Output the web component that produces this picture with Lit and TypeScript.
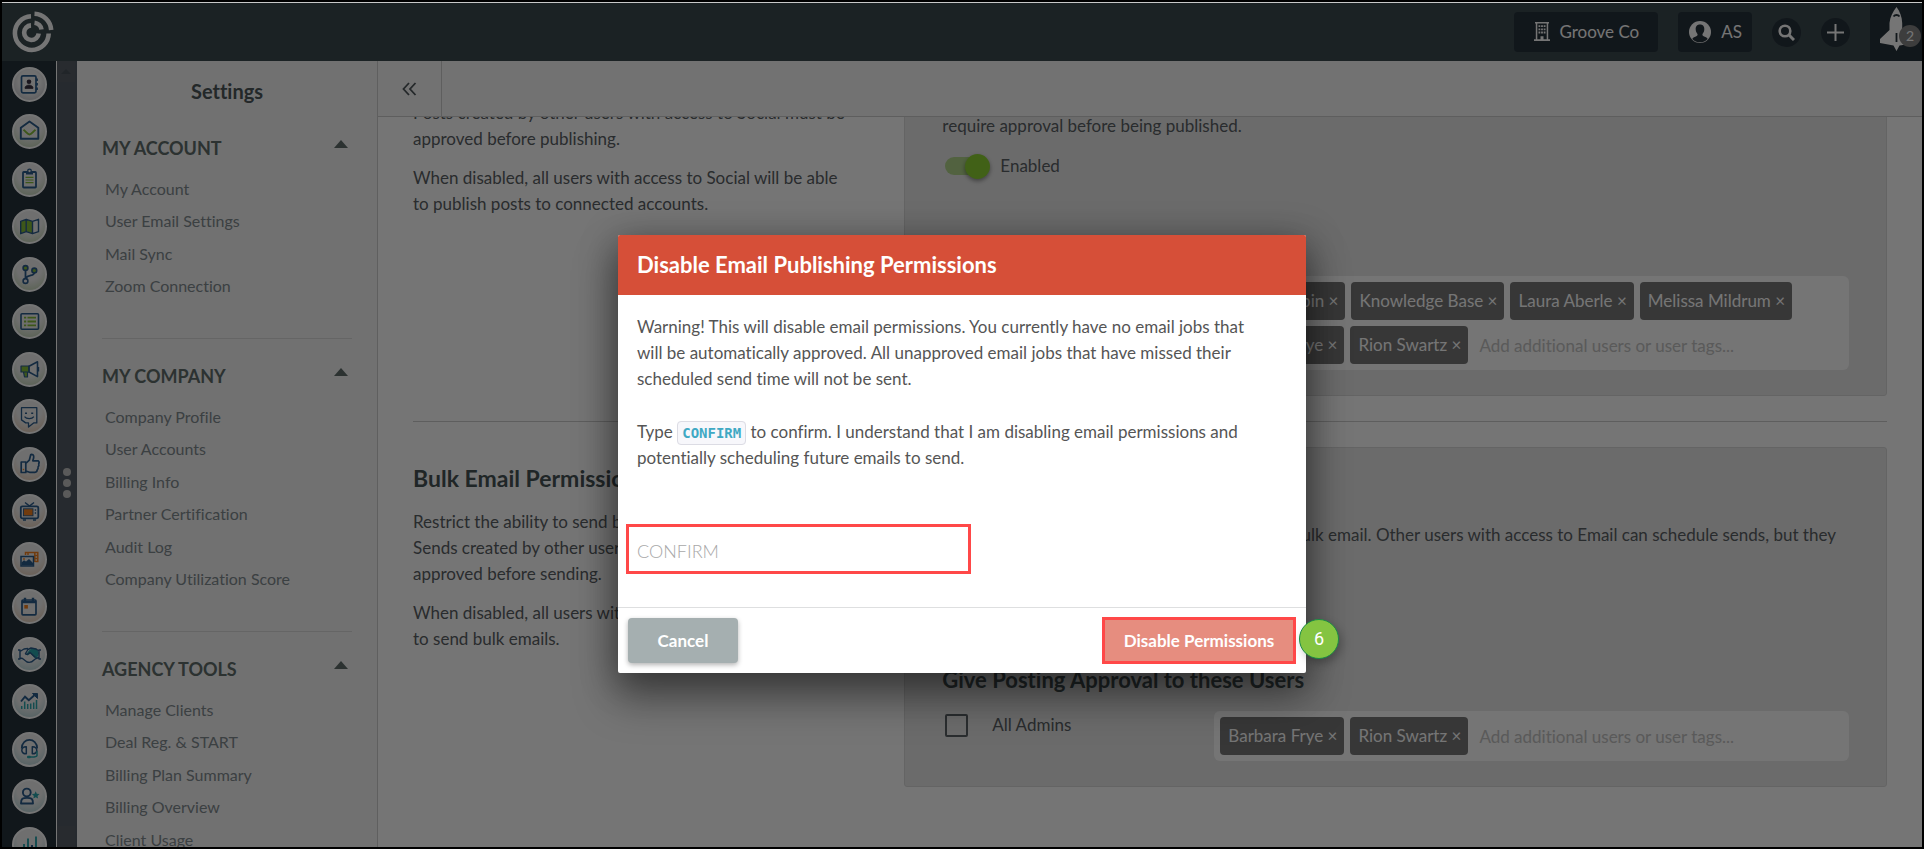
import { LitElement, html, svg, css } from "lit";
import { customElement, property } from "lit/decorators.js";

type Tint = "grey" | "green" | "orange" | "teal";

const N = "#2b5c8c";
const G = "#86bd3a";
const O = "#f58220";
const T = "#2aa5ad";

const railItems: { label: string; tint: Tint; icon: unknown }[] = [
  { label: "Contacts", tint: "grey", icon: svg`
    <rect x="9.5" y="8.8" width="14.5" height="17" rx="1.5" fill="none" stroke=${N} stroke-width="1.7"/>
    <path d="M24.8 11.5v2.6M24.8 16v2.6M24.8 20.5v2.6" stroke=${N} stroke-width="2.2"/>
    <circle cx="17" cy="14.8" r="2.3" fill="#3b3444"/><path d="M13 21.3c0-4.2 8-4.2 8 0z" fill="#3b3444" stroke="#3b3444"/>` },
  { label: "Email", tint: "green", icon: svg`
    <path d="M8.8 24.8v-11L17.5 7.5l8.8 6.3v11z" fill="none" stroke=${N} stroke-width="1.9" stroke-linejoin="round"/>
    <path d="M11.5 15.8c3 2.2 4 4.6 6 4.6s3-2.4 6-4.6" fill="none" stroke=${G} stroke-width="2"/>` },
  { label: "Forms", tint: "green", icon: svg`
    <rect x="11" y="10" width="13" height="15.5" rx=".8" fill="none" stroke=${N} stroke-width="1.8"/>
    <path d="M14 9.5h7v3h-7z" fill=${N}/><circle cx="17.5" cy="9" r="1.8" fill="#f4f4f4" stroke=${N} stroke-width="1.3"/>
    <path d="M13.5 15.3h8M13.5 18h8M13.5 20.7h8" stroke=${G} stroke-width="1.2"/>` },
  { label: "Landing pages", tint: "green", icon: svg`
    <path d="M9 12.5l5-2v12l-5 2zM20.5 12.5l-6-2v12l6 2z" fill=${G}/>
    <path d="M8.7 12.3l5.5-2 6.3 2 6-2v12.4l-6 2-6.3-2-5.5 2zM14.2 10.3v12.4M20.5 12.3v12.4" fill="none" stroke=${N} stroke-width="1.4" stroke-linejoin="round"/>` },
  { label: "Automations", tint: "green", icon: svg`
    <path d="M13.5 13v9M22.5 14.5c0 6-6 2-9 7" fill="none" stroke=${N} stroke-width="1.8"/>
    <circle cx="13.5" cy="11" r="2.4" fill=${G} stroke=${N} stroke-width="1.6"/><circle cx="22.3" cy="13.5" r="2.4" fill=${G} stroke=${N} stroke-width="1.6"/>
    <circle cx="13.5" cy="24" r="2.4" fill="#eee" stroke=${N} stroke-width="1.6"/>` },
  { label: "Lists", tint: "green", icon: svg`
    <rect x="9" y="9.8" width="17.5" height="15.5" rx="1" fill="none" stroke=${N} stroke-width="1.6"/>
    <path d="M12 13.7h2.2M12 17.5h2.2M12 21.3h2.2M15.5 13.7h8.5M15.5 17.5h8.5M15.5 21.3h8.5" stroke=${G} stroke-width="1.8"/>` },
  { label: "Campaigns", tint: "green", icon: svg`
    <path d="M9 14h8v6H9zM11.5 20h4v5h-3z" fill=${G} stroke=${N} stroke-width="1.2" stroke-linejoin="round"/>
    <path d="M17 14.2l8.5-4.4v14.8L17 20zM26.4 15v4.4" fill="none" stroke=${N} stroke-width="1.6" stroke-linejoin="round"/>` },
  { label: "Chat", tint: "orange", icon: svg`
    <path d="M9.5 8.7h15.3v15.2h-3.2L16.5 28v-4.1h-2.8l-4.2-3z" fill="none" stroke=${N} stroke-width="1.3" stroke-linejoin="round"/>
    <path d="M13 14.2h2M19.2 14.2h2" stroke=${N} stroke-width="1.6"/><path d="M12.5 17.6c2 2.6 7.4 2.6 9.4 0" fill="none" stroke=${N} stroke-width="1.2"/>` },
  { label: "Social", tint: "orange", icon: svg`
    <path d="M9.2 15h4.6v10.5H9.2zM13.8 16.5l3.5-3.3 1.5-5.7c3.4-.4 3.6 2 2 6.3h5.5c1.2 1 1 2 .4 3 .4 1.3.2 2.3-.6 3 .2 1.3 0 2.3-.9 3-.1 1.7-.8 2.5-2.2 2.5h-5.5l-3.7-1.3" fill="none" stroke=${N} stroke-width="1.7" stroke-linejoin="round"/>
    <rect x="10.8" y="21.8" width="1.4" height="1.4" fill=${O}/>` },
  { label: "Ads", tint: "orange", icon: svg`
    <path d="M13 8.5l4.5 3.5 4.5-3.5M11 26h3M21 26h3" fill="none" stroke=${N} stroke-width="1.5"/>
    <rect x="8.8" y="12.3" width="17.5" height="12" rx="1.5" fill="none" stroke=${N} stroke-width="1.8"/>
    <rect x="11.5" y="14.8" width="9.5" height="7" fill=${O} stroke=${N} stroke-width=".9"/><path d="M23.4 15.3v1.5M23.4 18.3v1.5" stroke=${N} stroke-width="1.4"/>` },
  { label: "Media", tint: "orange", icon: svg`
    <path d="M13.5 13v-2.5h12.3v9h-2.5M16 10v3M22.8 11v9M23 13.5h3M23 16.5h3" fill="none" stroke=${O} stroke-width="1.5"/>
    <rect x="9" y="14.5" width="12.5" height="9.5" fill="#eee" stroke=${N} stroke-width="1.5"/>
    <path d="M9.5 23.5v-3l2.5-2.3 2 1.3 3-2.5 4 4v2.5z" fill=${N}/><circle cx="12" cy="17" r=".9" fill=${O}/>` },
  { label: "Calendar", tint: "orange", icon: svg`
    <rect x="10" y="11" width="14" height="14.8" rx="1" fill="none" stroke=${N} stroke-width="1.7"/>
    <path d="M10 13h14M13 8.8v3M21 8.8v3" stroke=${N} stroke-width="2.4"/><rect x="12.3" y="16" width="3.6" height="3.6" fill=${O}/>` },
  { label: "Opportunities", tint: "teal", icon: svg`
    <path d="M17 13.5l2.5-2h5l2.5 4.5-2 5.5-3-1-3.5-4-3 2-1.5-1z" fill=${T}/>
    <path d="M6 13h2v9H6M29 13h-2v9h2M8 14.5l4-2.5 4-.5M8 21l2.5.5 4.5 3.5c2 .7 5 .3 7-2l2.5-2M16 12.5l3-1.5 5 1 3 2M16 12.5l-2.5 4c1 1.5 2.5 1 4.5-1l5.5 5M27 20.5l-3 1" fill="none" stroke=${N} stroke-width="1.4" stroke-linejoin="round"/>` },
  { label: "Analytics", tint: "teal", icon: svg`
    <path d="M9 17.5l4-4.8 3.8 3.6 6.4-5.8" fill="none" stroke=${N} stroke-width="1.9"/><path d="M20.5 9.5h5v5z" fill=${N} stroke=${N}/>
    <path d="M9.7 25v-3M12.7 25v-7.5M15.7 25v-5M18.7 25v-5.5M21.7 25v-6.5M24.5 25v-9" stroke=${T} stroke-width="1.5"/>` },
  { label: "Support", tint: "teal", icon: svg`
    <path d="M9.7 16.5c0-11.5 15.5-11.5 15.5 0" fill="none" stroke=${N} stroke-width="1.7"/>
    <path d="M14.3 14.8v7c-6 .4-6-7.4 0-7zM20.3 14.8v7c6 .4 6-7.4 0-7z" fill="none" stroke=${N} stroke-width="1.5" stroke-linejoin="round"/>
    <path d="M25 19v4.5c-.5 1.8-3 1.6-6 1.6" fill="none" stroke=${T} stroke-width="1.5"/><rect x="15" y="23.8" width="4" height="2.4" rx="1" fill=${T}/>` },
  { label: "User rewards", tint: "teal", icon: svg`
    <circle cx="14.8" cy="13.5" r="3.9" fill="none" stroke=${N} stroke-width="1.9"/>
    <path d="M9 24.5c0-5 1.5-5.6 6-5.6s6 .6 6 5.6z" fill="none" stroke=${N} stroke-width="1.9" stroke-linejoin="round"/>
    <path d="M23.7 12.3l1.1 2.5 2.7.3-2 1.8.6 2.7-2.4-1.4-2.4 1.4.6-2.7-2-1.8 2.7-.3z" fill=${T}/>` },
  { label: "Reports", tint: "teal", icon: svg`
    <path d="M12 26v-9M16 26V11.5M20 26v-8M24 26V9.5" stroke=${T} stroke-width="1.9"/><path d="M12 26v-4M20 26v-8" stroke=${N} stroke-width="1.9"/>` },
];

const groups = [
  { title: "MY ACCOUNT", items: ["My Account", "User Email Settings", "Mail Sync", "Zoom Connection"] },
  { title: "MY COMPANY", items: ["Company Profile", "User Accounts", "Billing Info", "Partner Certification", "Audit Log", "Company Utilization Score"] },
  { title: "AGENCY TOOLS", items: ["Manage Clients", "Deal Reg. & START", "Billing Plan Summary", "Billing Overview", "Client Usage"] },
];

const reset = css`
  * { box-sizing: border-box; }
  a { color: inherit; text-decoration: none; }
  h1, h2, h3, p, ul { margin: 0; padding: 0; font-weight: 400; }
  ul { list-style: none; }
  button, input { font: inherit; color: inherit; border: 0; padding: 0; margin: 0; }
  svg { display: block; }
`;

@customElement("top-bar")
class TopBar extends LitElement {
  static styles = [reset, css`
    :host { display: flex; align-items: center; gap: 20px; background: #3b4a50; color: #fff; padding-left: 10px; }
    .logo { margin-right: auto; }
    .btn { display: flex; align-items: center; background: #27323b; height: 40px; border-radius: 4px; cursor: pointer; }
    .company { padding: 0 19px 0 20px; gap: 9px; }
    .user { padding: 0 10px 0 11px; gap: 10px; }
    .round { width: 29px; height: 29px; border-radius: 50%; justify-content: center; }
    .rocket { position: relative; align-self: stretch; width: 52px; background: #27323b; padding: 4px 0 0 10px; }
    .count { position: absolute; right: 1px; top: 22px; width: 22px; height: 22px; border-radius: 50%; background: #858585; font-size: 14px; line-height: 22px; text-align: center; }
  `];
  render() {
    return html`
      <a class="logo" href="#" aria-label="Home">
        <svg width="42" height="42" viewBox="0 0 42 42" fill="none" stroke="#fff" stroke-width="4.6">
          <path d="M19 5.2A16.9 16.9 0 1 0 36.7 22.5"/><path d="M22.5 2.8A17.5 17.5 0 0 1 39.2 19"/>
          <path d="M19 14.4A7.3 7.3 0 1 0 26.7 22.5"/><path d="M22.5 11.8A8 8 0 0 1 29.5 18.5"/>
        </svg>
      </a>
      <button class="btn company">
        <svg width="16" height="20" viewBox="0 0 16 20"><path fill="#fff" fill-rule="evenodd" d="M1 0h14v1.5h-.8v15.8H16V19H0v-1.7h1.8V1.5H1zM3.3 1.5v15.8h3.2v-3h3v3h3.2V1.5zM4.5 3.2h1.8V5H4.5zM7.1 3.2h1.8V5H7.1zM9.7 3.2h1.8V5H9.7zM4.5 6.4h1.8v1.8H4.5zM7.1 6.4h1.8v1.8H7.1zM9.7 6.4h1.8v1.8H9.7zM4.5 9.6h1.8v1.8H4.5zM7.1 9.6h1.8v1.8H7.1zM9.7 9.6h1.8v1.8H9.7z"/></svg>
        <span>Groove Co</span>
      </button>
      <button class="btn user">
        <svg width="22" height="22" viewBox="0 0 22 22"><circle cx="11" cy="11" r="11" fill="#fff"/><path fill="#27323b" d="M11 3.6c3.2 0 4.5 2.3 4.3 5-.1 2-.9 3.4-1.8 4.5-.3 1.3.2 1.8 1.6 2.3 1.8.6 3.2 1.3 3.6 2.6C16.5 20.5 14 21.3 11 21.3S5.5 20.5 3.3 18c.4-1.3 1.8-2 3.6-2.6 1.4-.5 1.9-1 1.6-2.3-.9-1.1-1.7-2.5-1.8-4.5-.2-2.7 1.1-5 4.3-5z"/></svg>
        <span>AS</span>
      </button>
      <button class="btn round" aria-label="Search">
        <svg width="17" height="17" viewBox="0 0 17 17" fill="none" stroke="#fff"><circle cx="7" cy="7" r="5.3" stroke-width="2.6"/><path d="M11 11l5 5" stroke-width="3"/></svg>
      </button>
      <button class="btn round" aria-label="Add">
        <svg width="17" height="17" viewBox="0 0 17 17" stroke="#fff" stroke-width="2"><path d="M8.5 0v17M0 8.5h17"/></svg>
      </button>
      <div class="rocket">
        <svg width="30" height="44" viewBox="0 0 30 44"><path fill="#fff" d="M16.5 0c3.5 4.5 5.5 10 5.7 16v9.5l7.3 8V37l-10 1.5-3 5.5-3-5.5L0 36v-4l9.5-9v-7C10 10 13 4.500 16.500 0z"/><path fill="none" stroke="#27323b" stroke-width="1.8" d="M13.500 9.500c1.500-2 4.500-2 6 0M16.500 26v9"/></svg>
        <span class="count">2</span>
      </div>`;
  }
}

@customElement("icon-rail")
class IconRail extends LitElement {
  static styles = [reset, css`
    :host { display: block; background: #27323b; border-right: 1px solid #fff; overflow: hidden; padding: 6px 0 0 10px; }
    li { margin-bottom: 12px; }
    li:nth-child(even) { margin-bottom: 13px; }
    .item { display: block; width: 35px; height: 35px; border-radius: 50%; border: 2px solid #fff; }
    .item svg { margin: -2px; }
    .grey { background: radial-gradient(circle at 50% 40%, #f4f4f4 45%, #b9b9c0); }
    .green { background: radial-gradient(circle at 50% 30%, #f2f2f2 45%, #b9cfa8); }
    .orange { background: radial-gradient(circle at 50% 30%, #f2f2f2 45%, #e5c5a8); }
    .teal { background: radial-gradient(circle at 50% 30%, #f2f2f2 45%, #a8cfd3); }
  `];
  render() {
    return html`<nav aria-label="Products"><ul>${railItems.map((i) => html`
      <li><a class="item ${i.tint}" href="#" aria-label=${i.label}><svg width="35" height="35" viewBox="0 0 35 35">${i.icon}</svg></a></li>`)}</ul></nav>`;
  }
}

@customElement("settings-nav")
class SettingsNav extends LitElement {
  static styles = [reset, css`
    :host { display: block; background: #f6f6f6; border-right: 1px solid #cfcfcf; padding: 18px 25px 0; overflow: hidden; }
    h1 { font-size: 20px; line-height: 24px; font-weight: 700; color: #4e575b; text-align: center; margin-bottom: 33px; }
    section + section { border-top: 1px solid #dcdcdc; padding-top: 25px; margin-top: 36px; }
    .head { display: flex; justify-content: space-between; width: 100%; background: none; font-size: 18px; line-height: 24px; font-weight: 700; color: #606d6b; padding-right: 4px; cursor: pointer; }
    .head svg { margin-top: 4px; }
    ul { margin-top: 13px; padding-left: 3px; font-size: 16px; line-height: 32px; color: #828b90; }
    li:nth-child(even) { margin-bottom: 1px; }
  `];
  render() {
    return html`<h1>Settings</h1>${groups.map((g) => html`
      <section>
        <button class="head">${g.title}<svg width="14" height="8" viewBox="0 0 14 8"><path fill="#606d6b" d="M7 0l7 8H0z"/></svg></button>
        <ul>${g.items.map((t) => html`<li><a href="#">${t}</a></li>`)}</ul>
      </section>`)}`;
  }
}

@customElement("approver-panel")
class ApproverPanel extends LitElement {
  @property() heading = "";
  @property() lead = "";
  @property() tail = "";
  @property({ type: Array }) users: string[] = [];
  static styles = [reset, css`
    :host { display: block; background: #e9e9e9; border: 1px solid #dadada; border-radius: 3px; padding: 12px 37px 25px; }
    .title { font-size: 22px; line-height: 30px; font-weight: 700; color: #475356; margin: 17px 0 15px; }
    .desc { line-height: 26px; }
    .switch { display: flex; align-items: center; gap: 12px; height: 26px; margin: 14px 0 51px 3px; }
    .switch input { appearance: none; width: 43px; height: 18px; border-radius: 9px; background: #b2d68c; display: flex; align-items: center; justify-content: flex-end; }
    .switch input::before { content: ""; width: 25px; height: 25px; margin-right: -2px; border-radius: 50%; background: #8fd434; box-shadow: 0 2px 4px rgba(0,0,0,.4); flex: none; }
    .sub { font-size: 22px; line-height: 30px; font-weight: 700; color: #475356; margin-bottom: 16px; }
    .row { display: grid; grid-template-columns: 272px 1fr; align-items: start; }
    .check { display: flex; align-items: center; gap: 24px; padding: 1px 3px; line-height: 26px; }
    .check input { appearance: none; width: 23px; height: 23px; border: 2px solid #5c6266; border-radius: 2px; }
    .field { display: flex; flex-wrap: wrap; gap: 6px; padding: 6px; background: #fff; border-radius: 6px; }
    .chip { height: 38px; padding: 0 7px 0 8px; border-radius: 4px; background: #787878; color: #fff; line-height: 37px; white-space: nowrap; }
    .chip button { background: none; cursor: pointer; }
    .add { flex: 1; min-width: 260px; height: 38px; padding-left: 5px; background: none; }
    .add::placeholder { color: #c4c4c4; opacity: 1; }
  `];
  render() {
    return html`
      ${this.heading ? html`<h2 class="title">${this.heading}</h2>` : ""}
      <p class="desc">${this.lead} ${this.tail}</p>
      <label class="switch"><input type="checkbox" role="switch" checked />Enabled</label>
      <h3 class="sub">Give Posting Approval to these Users</h3>
      <div class="row">
        <label class="check"><input type="checkbox" />All Admins</label>
        <div class="field">
          ${this.users.map((u) => html`<span class="chip">${u} <button aria-label="Remove ${u}">×</button></span>`)}
          <input class="add" aria-label="Add users" placeholder="Add additional users or user tags..." />
        </div>
      </div>`;
  }
}

@customElement("confirm-dialog")
class ConfirmDialog extends LitElement {
  static styles = [reset, css`
    :host { display: block; position: relative; width: 688px; background: #fff; border-radius: 2px; color: #555; box-shadow: 0 24px 40px 3px rgba(0,0,0,.35), 0 6px 36px rgba(0,0,0,.35); }
    h2 { background: #d64f38; color: #fff; font-size: 22px; line-height: 60px; font-weight: 700; padding: 0 19px; border-radius: 2px 2px 0 0; }
    .body { padding: 19px 8px 33px; }
    .body p { line-height: 26px; padding: 0 36px 0 11px; margin-bottom: 27px; }
    code { font: 700 14px "DejaVu Sans Mono", monospace; color: #3fa9c4; background: #f7f7fb; border: 1px solid #dcdce4; border-radius: 4px; padding: 3px 4px; }
    .body input { display: block; width: 345px; height: 50px; border: 3px solid #ff4848; padding: 4px 8px 0; margin-top: 53px; font-size: 18px; font-weight: 300; background: #fff; }
    .body input::placeholder { color: #a8a8a8; opacity: 1; }
    footer { display: flex; justify-content: space-between; align-items: center; border-top: 1px solid #dedfe0; padding: 9px 10px; }
    footer button { font-weight: 700; color: #fff; cursor: pointer; }
    .cancel { width: 110px; height: 45px; border-radius: 4px; background: #a5afb0; box-shadow: 0 2px 5px rgba(0,0,0,.3); }
    .danger { height: 47px; width: 194px; border: 3px solid #ff4848; background: #e68d7f; }
    .step { position: absolute; right: -33px; bottom: 14px; width: 40px; height: 40px; border-radius: 50%; background: #84c441; border: 1px solid #1a8a45; color: #fff; font: 18px/38px Roboto, sans-serif; text-align: center; box-shadow: 3px 4px 8px rgba(0,0,0,.25); }
  `];
  render() {
    return html`
      <h2>Disable Email Publishing Permissions</h2>
      <div class="body">
        <p>Warning! This will disable email permissions. You currently have no email jobs that will be automatically approved. All unapproved email jobs that have missed their scheduled send time will not be sent.</p>
        <p>Type <code>CONFIRM</code> to confirm. I understand that I am disabling email permissions and potentially scheduling future emails to send.</p>
        <input aria-label="Type CONFIRM" placeholder="CONFIRM" />
      </div>
      <footer><button class="cancel">Cancel</button><button class="danger">Disable Permissions</button></footer>
      <span class="step">6</span>`;
  }
}

@customElement("app-root")
class AppRoot extends LitElement {
  static styles = [reset, css`
    :host { display: block; box-sizing: border-box; height: 100vh; border: 2px solid #000; font: 17px/26px Lato, sans-serif; font-variant-ligatures: none; color: #5a6064; overflow: hidden; }
    .app { position: relative; height: 100%; border-top: 1px solid #c8c8c8; display: grid; grid-template: 58px minmax(0, 1fr) / 55px 20px 301px minmax(0, 1fr); background: #fff; overflow: hidden; }
    top-bar { grid-column: 1 / -1; }
    .strip { display: flex; flex-direction: column; justify-content: space-between; align-items: center; background: #535d66; }
    .arrow { width: 18px; height: 21px; background: #575f67; display: flex; align-items: center; justify-content: center; align-self: flex-start; }
    .dots { display: grid; gap: 3px; padding-top: 57px; }
    .dots i { width: 8px; height: 8px; border-radius: 50%; background: #c4c4c4; }
    .main { display: flex; flex-direction: column; min-height: 0; }
    .bar { flex: none; height: 56px; background: #f8f8f8; border-bottom: 1px solid #cdcdcd; display: flex; }
    .collapse { width: 64px; border-right: 1px solid #cdcdcd; background: none; display: flex; align-items: center; justify-content: center; cursor: pointer; }
    .view { flex: 1; min-height: 0; overflow: hidden; }
    .scrolled { margin-top: -17px; padding: 0 35px; }
    .section { display: grid; grid-template-columns: 1fr 2fr; }
    .section + .section { border-top: 1px solid #cdcdcd; margin-top: 25px; padding-top: 25px; }
    .about { padding-right: 50px; }
    .about h2 { font-size: 23px; line-height: 30px; font-weight: 700; color: #475356; padding: 16px 0; white-space: nowrap; }
    .about p + p { margin-top: 13px; }
    .scrim { position: absolute; inset: 0; background: rgba(0,0,0,.54); }
    .overlay { position: absolute; inset: 0; display: flex; justify-content: center; align-items: flex-start; padding-top: 232px; }
  `];
  render() {
    return html`<div class="app">
      <top-bar></top-bar>
      <icon-rail></icon-rail>
      <div class="strip">
        <span class="arrow"><svg width="10" height="5" viewBox="0 0 10 5"><path fill="#48525a" d="M5 0l5 5H0z"/></svg></span>
        <span class="dots"><i></i><i></i><i></i></span>
        <span class="arrow"></span>
      </div>
      <settings-nav></settings-nav>
      <div class="main">
        <div class="bar"><button class="collapse" aria-label="Collapse"><svg width="15" height="14" viewBox="0 0 15 14" fill="none" stroke="#50585c" stroke-width="1.8"><path d="M7 1L1.5 7 7 13M13.5 1L8 7l5.5 6"/></svg></button></div>
        <div class="view"><div class="scrolled">
          <div class="section">
            <div class="about">
              <p>Posts created by other users with access to Social must be approved before publishing.</p>
              <p>When disabled, all users with access to Social will be able to publish posts to connected accounts.</p>
            </div>
            <approver-panel tail="require approval before being published."
              .users=${["Emma Dobin", "Knowledge Base", "Laura Aberle", "Melissa Mildrum", "Barbara Frye", "Rion Swartz"]}></approver-panel>
          </div>
          <div class="section">
            <div class="about">
              <h2>Bulk Email Permissions</h2>
              <p>Restrict the ability to send bulk emails to selected users. Sends created by other users with access to Email must be approved before sending.</p>
              <p>When disabled, all users with access to Emails will be able to send bulk emails.</p>
            </div>
            <approver-panel heading="Email Sends"
              lead="The users chosen below can approve and send bulk email. Other users with access to Email can schedule sends, but they"
              tail="require approval before being sent."
              .users=${["Barbara Frye", "Rion Swartz"]}></approver-panel>
          </div>
        </div></div>
      </div>
      <div class="scrim"></div>
      <div class="overlay"><confirm-dialog role="dialog" aria-modal="true" aria-label="Disable Email Publishing Permissions"></confirm-dialog></div>
    </div>`;
  }
}
